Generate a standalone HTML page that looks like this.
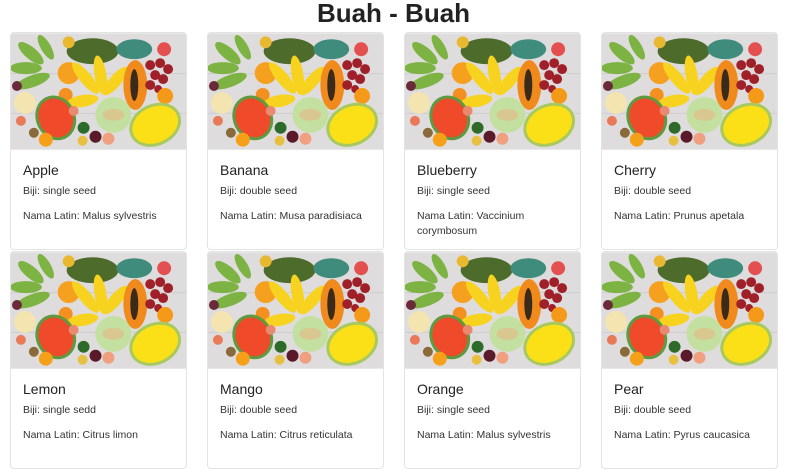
<!DOCTYPE html>
<html><head><meta charset="utf-8"><style>
*{margin:0;padding:0;box-sizing:border-box}
body{width:787px;height:445px;overflow:hidden;background:#fff;font-family:"Liberation Sans",sans-serif;color:#222;position:relative}
h1{position:absolute;top:-2px;left:0;width:787px;text-align:center;font-size:26px;font-weight:bold;color:#222}
.card{position:absolute;width:177px;height:218px;border:1px solid #e3e3e3;border-radius:4px;overflow:hidden;background:#fff}
.card svg{display:block;width:175px;height:117px}
.name{position:absolute;left:12px;top:129px;font-size:14px;color:#222}
.b{position:absolute;left:12px;top:152px;font-size:10.5px;color:#333}
.l{position:absolute;left:12px;top:176px;font-size:10.5px;color:#333;line-height:15px;width:155px}
</style></head><body>
<svg width="0" height="0" style="position:absolute">
<defs><symbol id="f" viewBox="0 0 176 117">
<rect width="176" height="117" fill="#dedcdc"/>
<rect y="40" width="176" height="1" fill="#cfcdcd"/><rect y="80" width="176" height="1" fill="#cfcdcd"/>
<g fill="#7cb342"><ellipse cx="20" cy="20" rx="16" ry="6" transform="rotate(40 20 20)"/><ellipse cx="15" cy="35" rx="16" ry="6"/><ellipse cx="22" cy="48" rx="18" ry="6" transform="rotate(-20 22 48)"/><ellipse cx="35" cy="14" rx="14" ry="5" transform="rotate(60 35 14)"/></g>
<ellipse cx="82" cy="18" rx="26" ry="13" fill="#4d6b2a"/>
<ellipse cx="124" cy="16" rx="18" ry="10" fill="#3f8c7d"/>
<circle cx="154" cy="16" r="7" fill="#e45050"/>
<circle cx="58" cy="9" r="6" fill="#e8b830"/>
<circle cx="58" cy="40" r="11" fill="#f6a020"/>
<circle cx="55" cy="62" r="7" fill="#f39020"/>
<g fill="#f7d320"><ellipse cx="75" cy="45" rx="20" ry="6" transform="rotate(50 75 45)"/><ellipse cx="90" cy="42" rx="20" ry="6" transform="rotate(80 90 42)"/><ellipse cx="105" cy="48" rx="18" ry="6" transform="rotate(-50 105 48)"/><ellipse cx="72" cy="68" rx="16" ry="6" transform="rotate(-10 72 68)"/></g>
<ellipse cx="125" cy="52" rx="12" ry="25" fill="#f08a1c"/><ellipse cx="124" cy="52" rx="4" ry="16" fill="#3a2a1a"/>
<g fill="#a0202a"><circle cx="140" cy="32" r="5"/><circle cx="150" cy="30" r="5"/><circle cx="158" cy="36" r="5"/><circle cx="145" cy="42" r="5"/><circle cx="153" cy="46" r="5"/><circle cx="140" cy="52" r="5"/><circle cx="148" cy="56" r="4"/></g>
<circle cx="155" cy="63" r="8" fill="#f59a18"/>
<circle cx="6" cy="53" r="5" fill="#6a2a3a"/>
<circle cx="14" cy="70" r="11" fill="#f4e4b0"/>
<ellipse cx="45" cy="85" rx="20" ry="23" fill="#5f9a40" transform="rotate(-25 45 85)"/><ellipse cx="45" cy="85" rx="17" ry="20" fill="#ef4a2a" transform="rotate(-25 45 85)"/>
<circle cx="103" cy="82" r="18" fill="#c3e0a0"/><ellipse cx="103" cy="82" rx="11" ry="6" fill="#d8c890"/>
<ellipse cx="145" cy="92" rx="27" ry="21" fill="#a8c860" transform="rotate(-25 145 92)"/><ellipse cx="145" cy="92" rx="24" ry="18" fill="#fbe018" transform="rotate(-25 145 92)"/>
<circle cx="35" cy="107" r="7" fill="#f5a018"/><circle cx="73" cy="95" r="6" fill="#2e6a2a"/><circle cx="85" cy="104" r="6" fill="#5a1a2a"/><circle cx="98" cy="106" r="6" fill="#f0a080"/><circle cx="72" cy="108" r="5" fill="#e8c040"/><circle cx="23" cy="100" r="5" fill="#8a6a3a"/><circle cx="10" cy="88" r="5" fill="#e87a5a"/><circle cx="63" cy="78" r="5" fill="#e88a70"/>
</symbol></defs></svg>
<h1>Buah - Buah</h1>

<div class="card" style="left:10px;top:32px"><svg><use href="#f"/></svg><div class="name">Apple</div><div class="b">Biji: single seed</div><div class="l">Nama Latin: Malus sylvestris</div></div>
<div class="card" style="left:207px;top:32px"><svg><use href="#f"/></svg><div class="name">Banana</div><div class="b">Biji: double seed</div><div class="l">Nama Latin: Musa paradisiaca</div></div>
<div class="card" style="left:404px;top:32px"><svg><use href="#f"/></svg><div class="name">Blueberry</div><div class="b">Biji: single seed</div><div class="l">Nama Latin: Vaccinium corymbosum</div></div>
<div class="card" style="left:601px;top:32px"><svg><use href="#f"/></svg><div class="name">Cherry</div><div class="b">Biji: double seed</div><div class="l">Nama Latin: Prunus apetala</div></div>

<div class="card" style="left:10px;top:251px"><svg><use href="#f"/></svg><div class="name">Lemon</div><div class="b">Biji: single sedd</div><div class="l">Nama Latin: Citrus limon</div></div>
<div class="card" style="left:207px;top:251px"><svg><use href="#f"/></svg><div class="name">Mango</div><div class="b">Biji: double seed</div><div class="l">Nama Latin: Citrus reticulata</div></div>
<div class="card" style="left:404px;top:251px"><svg><use href="#f"/></svg><div class="name">Orange</div><div class="b">Biji: single seed</div><div class="l">Nama Latin: Malus sylvestris</div></div>
<div class="card" style="left:601px;top:251px"><svg><use href="#f"/></svg><div class="name">Pear</div><div class="b">Biji: double seed</div><div class="l">Nama Latin: Pyrus caucasica</div></div>
</body></html>
